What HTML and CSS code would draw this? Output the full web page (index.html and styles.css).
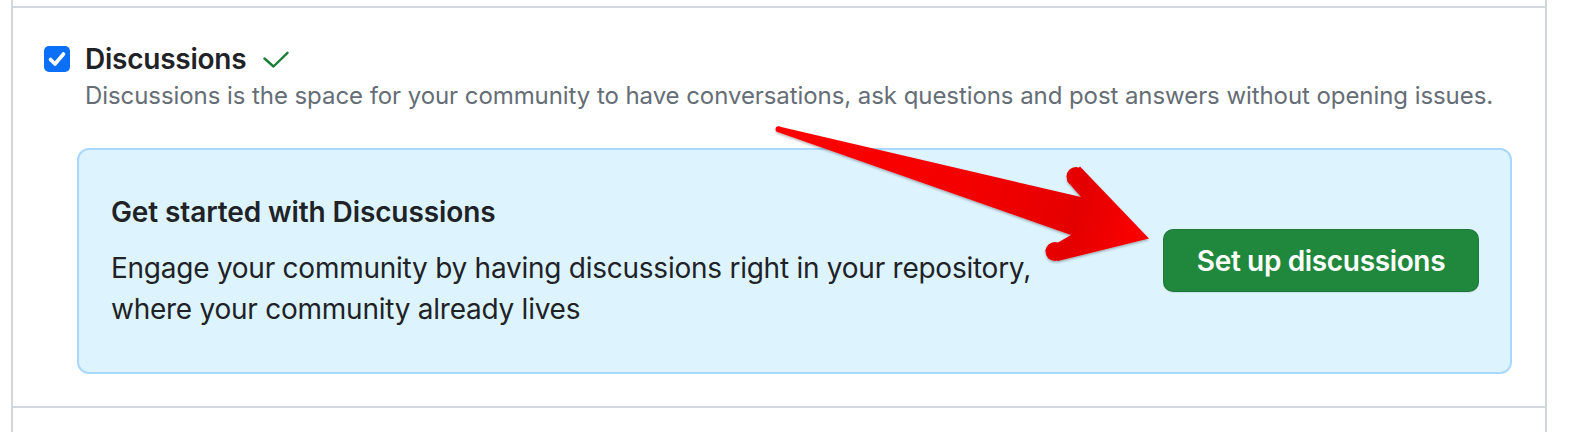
FILE: index.html
```html
<!DOCTYPE html>
<html lang="en">
<head>
<meta charset="UTF-8">
<meta name="viewport" content="width=device-width, initial-scale=1.0">
<title>Features - Discussions</title>
<link rel="stylesheet" href="styles.css">
</head>
<body>
<div class="settings">
    <div class="settings-row settings-row-above"></div>

    <!-- Discussions feature -->
    <div class="settings-row feature">
        <div class="feature-head">
            <span class="checkbox" role="checkbox" aria-checked="true">
                <svg width="26" height="26" viewBox="0 0 26 26"><polyline points="6.5,13.5 11,18 19.5,8" fill="none" stroke="#fff" stroke-width="3.6" stroke-linecap="round" stroke-linejoin="round"/></svg>
            </span>
            <h3 class="feature-title">Discussions</h3>
            <svg class="saved-check" width="26" height="18" viewBox="0 0 26 18"><polyline points="1.5,7.5 10.5,15.5 24.5,1.8" fill="none" stroke="#1a7f37" stroke-width="2.4" stroke-linecap="round" stroke-linejoin="round"/></svg>
        </div>
        <p class="feature-note">Discussions is the space for your community to have conversations, ask questions and post answers without opening issues.</p>

        <div class="callout">
            <div class="callout-body">
                <h4 class="callout-title">Get started with Discussions</h4>
                <p class="callout-text">Engage your community by having discussions right in your repository, where your community already lives</p>
            </div>
            <button class="btn-primary">Set up discussions</button>
        </div>
    </div>

    <div class="settings-row settings-row-below"></div>
</div>

<!-- red annotation arrow drawn over the page -->
<svg class="annotation" width="1570" height="432" viewBox="0 0 1570 432">
    <defs>
        <linearGradient id="arrowFill" x1="780" y1="130" x2="1150" y2="240" gradientUnits="userSpaceOnUse">
            <stop offset="0" stop-color="#ff0000"/>
            <stop offset="0.55" stop-color="#f20000"/>
            <stop offset="0.8" stop-color="#e40000"/>
            <stop offset="1" stop-color="#ff0000"/>
        </linearGradient>
        <filter id="arrowShadow" x="-5%" y="-20%" width="110%" height="140%">
            <feDropShadow dx="0" dy="1.5" stdDeviation="1" flood-color="#000" flood-opacity="0.3"/>
        </filter>
    </defs>
    <g fill="url(#arrowFill)" filter="url(#arrowShadow)">
        <polygon points="779,126.5 1081,197 1067,181 1080,166.5 1149,238.5 1058,261 1045,250 1071,235 777.5,132"/>
        <circle cx="1076" cy="176.5" r="9.5"/>
        <circle cx="1055" cy="251.5" r="9.5"/>
        <circle cx="778.5" cy="129.2" r="2.9"/>
    </g>
</svg>
</body>
</html>
```

FILE: styles.css
```css
body {
    margin: 0;
    font-family: Inter, "Noto Sans", "Liberation Sans", sans-serif;
    color: #1f2328;
    background: #fff;
}

.settings {
    position: relative;
    margin-left: 11px;
    width: 1536px;
    height: 432px;
    box-sizing: border-box;
    border-left: 2px solid #d0d7de;
    border-right: 2px solid #d0d7de;
}

.settings-row-above {
    height: 6px;
}

.feature {
    border-top: 2px solid #d0d7de;
    border-bottom: 2px solid #d0d7de;
    padding: 33px 33px 32px 31px;
}

.feature-head {
    display: flex;
    align-items: center;
    height: 36px;
}

.checkbox {
    display: block;
    width: 26px;
    height: 26px;
    border-radius: 5px;
    background-color: #0b6ff8;
    margin-right: 15px;
}

.checkbox svg {
    display: block;
}

.feature-title {
    margin: 0;
    font-size: 28px;
    line-height: 36px;
    font-weight: 600;
    letter-spacing: -0.25px;
}

.saved-check {
    margin-left: 17px;
    margin-top: 2px;
}

.feature-note {
    margin: 4px 0 0 41px;
    font-size: 24px;
    line-height: 30px;
    letter-spacing: -0.07px;
    color: #656d76;
}

.callout {
    display: flex;
    align-items: center;
    justify-content: space-between;
    margin: 37px 0 0 33px;
    padding: 44px 31px 42px 32px;
    background-color: #ddf4ff;
    border: 2px solid #a8d8fd;
    border-radius: 12px;
}

.callout-title {
    margin: 0 0 18px;
    font-size: 28px;
    line-height: 36px;
    font-weight: 600;
    letter-spacing: -0.1px;
}

.callout-text {
    margin: 0;
    max-width: 960px;
    font-size: 28px;
    line-height: 41px;
    letter-spacing: -0.25px;
}

.btn-primary {
    width: 316px;
    height: 63px;
    margin-top: -3px;
    padding: 0;
    font-family: inherit;
    font-size: 28px;
    font-weight: 600;
    letter-spacing: -0.35px;
    color: #fff;
    background-color: #1f883d;
    border: 1px solid rgba(31, 35, 40, 0.15);
    border-radius: 10px;
    box-shadow: 0 1px 0 rgba(31, 35, 40, 0.1);
    cursor: pointer;
}

.annotation {
    position: absolute;
    top: 0;
    left: 0;
    pointer-events: none;
}
```
